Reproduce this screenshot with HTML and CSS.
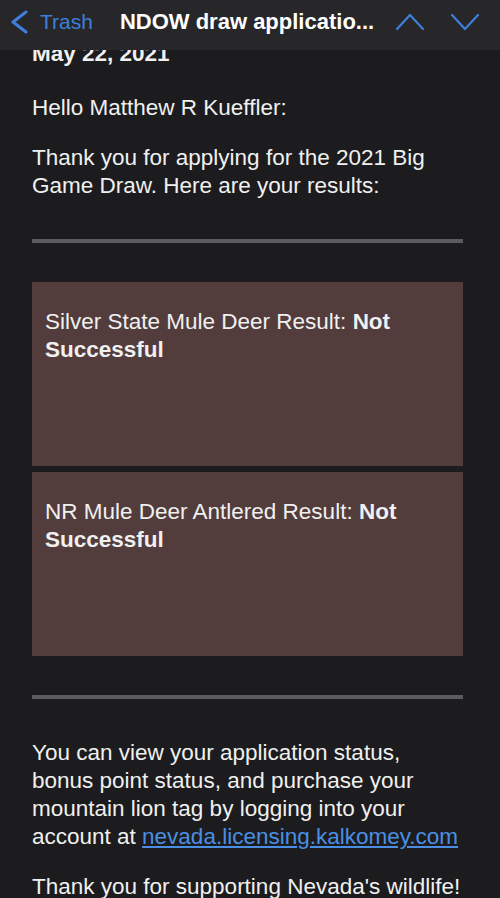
FILE: index.html
```html
<!DOCTYPE html>
<html lang="en">
<head>
    <meta charset="UTF-8">
    <meta name="viewport" content="width=device-width, initial-scale=1.0">
    <title>NDOW draw application</title>
    <link rel="stylesheet" href="styles.css">
</head>
<body>
    <div class="topbar">
        <div class="back">
            <svg width="20" height="24" viewBox="0 0 20 24">
                <polyline points="16,2 3,12 16,22" fill="none" stroke="#3d7fdb" stroke-width="3" stroke-linecap="round" stroke-linejoin="round"/>
            </svg>
            <span>Trash</span>
        </div>
        <div class="subject">NDOW draw applicatio...</div>
        <div class="arrows">
            <svg width="28" height="18" viewBox="0 0 28 18">
                <polyline points="1,16 14,2 27,16" fill="none" stroke="#3d7fdb" stroke-width="2.2" stroke-linecap="round" stroke-linejoin="round"/>
            </svg>
            <svg width="28" height="18" viewBox="0 0 28 18">
                <polyline points="1,2 14,16 27,2" fill="none" stroke="#3d7fdb" stroke-width="2.2" stroke-linecap="round" stroke-linejoin="round"/>
            </svg>
        </div>
    </div>

    <div class="mail">
        <p class="date">May 22, 2021</p>
        <p>Hello Matthew R Kueffler:</p>
        <p>Thank you for applying for the 2021 Big Game Draw. Here are your results:</p>

        <div class="rule"></div>

        <div class="result">Silver State Mule Deer Result: <b>Not Successful</b></div>
        <div class="result">NR Mule Deer Antlered Result: <b>Not Successful</b></div>

        <div class="rule"></div>

        <p>You can view your application status, bonus point status, and purchase your mountain lion tag by logging into your account at <a href="#">nevada.licensing.kalkomey.com</a></p>
        <p>Thank you for supporting Nevada's wildlife!</p>
    </div>
</body>
</html>
```

FILE: styles.css
```css
body {
    margin: 0;
    padding: 0;
    background: #1c1c1e;
    color: #f0f0f0;
    font-family: "Liberation Sans", Arial, sans-serif;
    overflow: hidden;
}

.topbar {
    position: fixed;
    top: 0;
    left: 0;
    right: 0;
    height: 50px;
    box-sizing: border-box;
    padding: 0 21px 6px 10px;
    background: #272729;
    display: flex;
    align-items: center;
    z-index: 10;
}

.back {
    display: flex;
    align-items: center;
    color: #3d7fdb;
    font-size: 21px;
}

.back svg {
    margin-right: 10px;
}

.subject {
    margin-left: 27px;
    color: #fff;
    font-size: 22px;
    font-weight: bold;
    white-space: nowrap;
}

.arrows {
    margin-left: auto;
    display: flex;
    gap: 27px;
}

.mail {
    padding: 40px 37px 0 32px;
    font-size: 22.5px;
    line-height: 28px;
}

.mail p {
    margin: 0 0 22px;
}

.mail p.date {
    font-weight: bold;
    margin-bottom: 26px;
}

.rule {
    height: 4px;
    background: #5c5c5e;
    margin: 39px 0;
}

.result {
    height: 184px;
    box-sizing: border-box;
    padding: 26px 13px 0;
    background: #523c3c;
    margin-bottom: 6px;
}

.result:last-of-type {
    margin-bottom: 0;
}

.rule + p {
    margin-top: 40px;
}

a {
    color: #4a8fe3;
}
```
